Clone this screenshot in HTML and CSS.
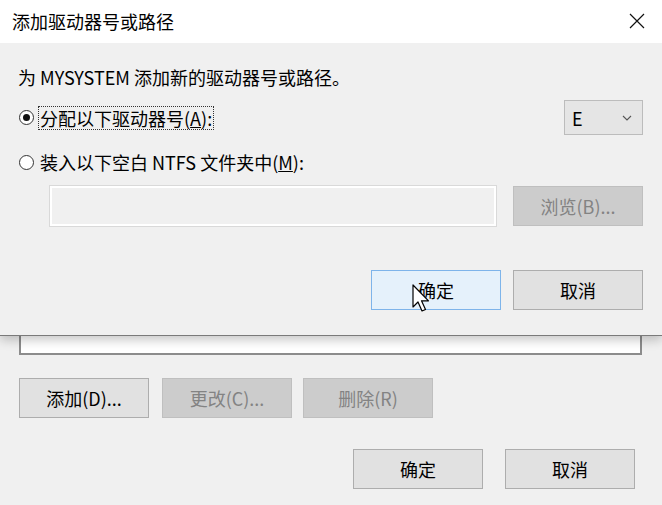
FILE: index.html
```html
<!DOCTYPE html>
<html lang="zh-CN">
<head>
    <meta charset="UTF-8">
    <title>添加驱动器号或路径</title>
    <link rel="stylesheet" href="styles.css">
</head>
<body>
    <!-- parent window (partly hidden) -->
    <div class="parent">
        <div class="listbox"></div>
        <div class="btn-row tools">
            <button class="btn">添加(D)...</button>
            <button class="btn disabled">更改(C)...</button>
            <button class="btn disabled">删除(R)</button>
        </div>
        <div class="btn-row end">
            <button class="btn">确定</button>
            <button class="btn">取消</button>
        </div>
    </div>

    <!-- Add drive letter dialog -->
    <div class="dialog">
        <div class="titlebar">
            <span class="title">添加驱动器号或路径</span>
            <svg class="close" width="16" height="16" viewBox="0 0 16 16">
                <path d="M1 1 L15 15 M15 1 L1 15" stroke="#111" stroke-width="1.2" fill="none"/>
            </svg>
        </div>
        <div class="dlg-body">
            <p class="intro">为 MYSYSTEM 添加新的驱动器号或路径。</p>

            <div class="opt-row">
                <label class="radio">
                    <span class="dot checked"></span>
                    <span class="focus">分配以下驱动器号(<u>A</u>):</span>
                </label>
                <div class="combo">
                    <span>E</span>
                    <svg width="10" height="6" viewBox="0 0 10 6">
                        <path d="M1 1 L5 5 L9 1" stroke="#555" stroke-width="1.1" fill="none"/>
                    </svg>
                </div>
            </div>

            <label class="radio second">
                <span class="dot"></span>
                <span class="plain">装入以下空白 NTFS 文件夹中(<u>M</u>):</span>
            </label>

            <div class="path-row">
                <div class="path-input"></div>
                <button class="btn disabled">浏览(B)...</button>
            </div>

            <div class="btn-row end">
                <button class="btn default">确定</button>
                <button class="btn">取消</button>
            </div>
        </div>
    </div>

    <svg class="cursor" width="20" height="30" viewBox="0 0 20 30">
        <path d="M1 1 L1 23 L6 18 L10 27 L13.5 25.5 L9.5 16.8 L16.5 16.8 Z" fill="#fff" stroke="#000" stroke-width="1.2" stroke-linejoin="round"/>
    </svg>
</body>
</html>
```

FILE: styles.css
```css
* {
    margin: 0;
    padding: 0;
    box-sizing: border-box;
}

body {
    width: 662px;
    height: 505px;
    overflow: hidden;
    position: relative;
    background-color: #f0f0f0;
    font-family: 'Noto Sans CJK SC', 'Noto Sans', sans-serif;
    font-size: 18px;
    line-height: 24px;
    color: #000;
}

/* parent window */
.parent {
    padding: 0 20px 0 19px;
    display: flex;
    flex-direction: column;
}

.listbox {
    margin-top: 290px;
    height: 65px;
    width: 623px;
    background-color: #fff;
    border: 2px solid #8c8c8c;
    border-width: 0 2px 2px 2px;
}

.parent .btn-row {
    display: flex;
    margin-top: 23px;
}

.tools .btn:nth-child(2) {
    margin-left: 13px;
}

.tools .btn:nth-child(3) {
    margin-left: 11px;
}

.parent .btn-row.end {
    justify-content: flex-end;
    gap: 22px;
    margin-top: 31px;
    padding-right: 7px;
}

.btn {
    width: 130px;
    height: 40px;
    background-color: #e1e1e1;
    border: 1px solid #adadad;
    font-family: inherit;
    font-size: 18px;
    color: #000;
}

.btn.disabled {
    background-color: #cccccc;
    border-color: #bfbfbf;
    color: #838383;
}

.btn.default {
    background-color: #e5f1fb;
    border-color: #7eb4ea;
}

/* dialog */
.dialog {
    position: absolute;
    top: 0;
    left: 0;
    width: 662px;
    height: 336px;
    background-color: #f0f0f0;
    border-bottom: 1px solid #7a7a7a;
    box-shadow: 0 4px 10px rgba(0,0,0,0.22);
}

.titlebar {
    height: 43px;
    background-color: #fff;
    display: flex;
    align-items: center;
    justify-content: space-between;
    padding: 0 17px 2px 12px;
}

.title {
    font-size: 18px;
}

.dlg-body {
    padding: 22px 19px 0 18px;
    display: flex;
    flex-direction: column;
}

.opt-row {
    display: flex;
    align-items: center;
    justify-content: space-between;
    margin-top: 11px;
    height: 35px;
}

.radio {
    display: flex;
    align-items: center;
    gap: 4px;
    padding-left: 1px;
}

.radio.second {
    margin-top: 15px;
}

.dot {
    width: 15px;
    height: 15px;
    border: 1px solid #333;
    border-radius: 50%;
    background-color: #fff;
    position: relative;
}

.dot.checked::after {
    content: "";
    position: absolute;
    left: 3px;
    top: 3px;
    width: 7px;
    height: 7px;
    border-radius: 50%;
    background-color: #111;
}

.focus {
    border: 1px dotted #333;
    padding: 0 1px;
    line-height: 22px;
}

.plain {
    padding: 0 2px;
}

.combo {
    width: 79px;
    height: 35px;
    background-color: #e5e5e5;
    border: 1px solid #bcbcbc;
    display: flex;
    align-items: center;
    justify-content: space-between;
    padding: 0 10px 0 7px;
}

.path-row {
    display: flex;
    justify-content: space-between;
    align-items: center;
    margin-top: 11px;
    padding-left: 31px;
}

.path-input {
    width: 448px;
    height: 42px;
    border: 1px solid #d9d9d9;
    box-shadow: inset 0 0 0 2px #fff;
    background-color: #f0f0f0;
}

.dlg-body .btn-row.end {
    display: flex;
    justify-content: flex-end;
    gap: 12px;
    margin-top: 43px;
    padding-right: 0;
}

.cursor {
    position: absolute;
    left: 412px;
    top: 284px;
}
```
